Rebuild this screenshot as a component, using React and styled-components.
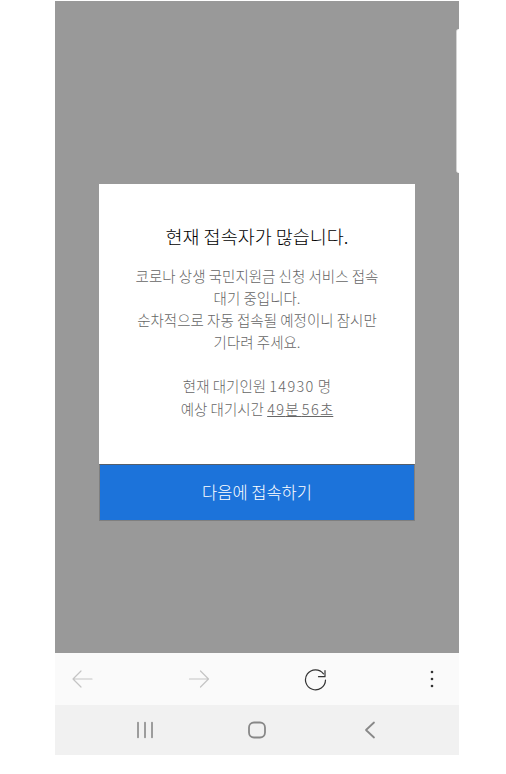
import React from "react";
import styled, { createGlobalStyle } from "styled-components";

const Global = createGlobalStyle`
  html, body {
    margin: 0;
    padding: 0;
    background: #fff;
  }
  body {
    font-family: "Noto Sans CJK KR", "Noto Sans", sans-serif;
    font-weight: 300;
  }
`;

const Phone = styled.div`
  width: 404px;
  height: 754px;
  margin-left: 55px;
  padding-top: 1px;
  display: flex;
  flex-direction: column;
  position: relative;
`;

const Overlay = styled.div`
  height: 652px;
  background: #999;
  padding: 183px 44px 0 44px;
  box-sizing: border-box;
`;

const EdgeHandle = styled.div`
  position: absolute;
  top: 29px;
  right: 0;
  width: 2px;
  height: 144px;
  background: #fff;
  border-left: 1px solid #d4d4d4;
  border-radius: 4px 0 0 4px;
`;

const Dialog = styled.div`
  width: 316px;
  height: 337px;
  background: #fff;
  display: flex;
  flex-direction: column;
`;

const Body = styled.div`
  flex: 1;
  padding-top: 38px;
  text-align: center;
`;

const Title = styled.h1`
  margin: 0 0 15px;
  font-size: 18.5px;
  line-height: 28px;
  font-weight: 300;
  color: #000;
`;

const Message = styled.p`
  margin: 0;
  font-size: 14.5px;
  line-height: 22px;
  color: #666;
`;

const Queue = styled(Message)`
  margin-top: 22px;
  line-height: 22.5px;
`;

const Digits = styled.span`
  letter-spacing: 1.3px;
`;

const Time = styled.span`
  text-decoration: underline;
`;

const NextButton = styled.button`
  height: 57px;
  border: 1px solid #7f7f7f;
  border-top-color: #555f6b;
  background: #1c73da;
  color: #fff;
  font-family: inherit;
  font-weight: 300;
  font-size: 16.5px;
  padding: 0 0 2px;
  box-sizing: border-box;
`;

const Toolbar = styled.div`
  height: 52px;
  background: #fafafa;
  display: flex;
  align-items: center;
  justify-content: space-between;
  padding: 0 15px;
`;

const ToolSlot = styled.div`
  width: 24px;
  height: 24px;
  display: flex;
  align-items: center;
  justify-content: center;
`;

const NavBar = styled.div`
  height: 50px;
  background: #f1f1f1;
  display: grid;
  grid-template-columns: repeat(3, 112.5px);
  justify-content: center;
  justify-items: center;
  align-items: center;
`;

const Icon = styled.svg.attrs({
  width: 24,
  height: 24,
  viewBox: "0 0 24 24",
  strokeLinecap: "round",
  strokeLinejoin: "round",
})`
  display: block;
  flex: none;
  fill: none;
`;

const Dot = styled.circle`
  fill: #333;
`;

const App = () => (
  <>
    <Global />
    <Phone>
      <Overlay>
        <Dialog>
          <Body>
            <Title>현재 접속자가 많습니다.</Title>
            <Message>
              코로나 상생 국민지원금 신청 서비스 접속
              <br />
              대기 중입니다.
              <br />
              순차적으로 자동 접속될 예정이니 잠시만
              <br />
              기다려 주세요.
            </Message>
            <Queue>
              현재 대기인원 <Digits>14930</Digits> 명
              <br />
              예상 대기시간{" "}
              <Time>
                <Digits>49</Digits>분 <Digits>56</Digits>초
              </Time>
            </Queue>
          </Body>
          <NextButton>다음에 접속하기</NextButton>
        </Dialog>
      </Overlay>
      <EdgeHandle />
      <Toolbar>
        <ToolSlot>
          <Icon stroke="#c4c4c4" strokeWidth="1.2">
            <path d="M3 12h19M11 4l-8 8 8 8" />
          </Icon>
        </ToolSlot>
        <ToolSlot>
          <Icon stroke="#c4c4c4" strokeWidth="1.2">
            <path d="M2.5 12h19M13.5 4l8 8-8 8" />
          </Icon>
        </ToolSlot>
        <ToolSlot>
          <Icon stroke="#333" strokeWidth="1.2">
            <path d="M20.5 6.8A10 10 0 1 0 22.5 13" />
            <path d="M22 3.5v6.2h-6.5" />
          </Icon>
        </ToolSlot>
        <ToolSlot>
          <Icon>
            <Dot cx="12" cy="5" r="1.3" />
            <Dot cx="12" cy="12" r="1.3" />
            <Dot cx="12" cy="19" r="1.3" />
          </Icon>
        </ToolSlot>
      </Toolbar>
      <NavBar>
        <Icon stroke="#888" strokeWidth="1.6">
          <path d="M5 4.5v15M12 4.5v15M19 4.5v15" />
        </Icon>
        <Icon stroke="#888" strokeWidth="1.8">
          <rect x="4" y="4.5" width="16" height="15" rx="5" />
        </Icon>
        <Icon stroke="#888" strokeWidth="1.8">
          <path d="M16 4.5 8 12l8 7.5" />
        </Icon>
      </NavBar>
    </Phone>
  </>
);

export default App;
